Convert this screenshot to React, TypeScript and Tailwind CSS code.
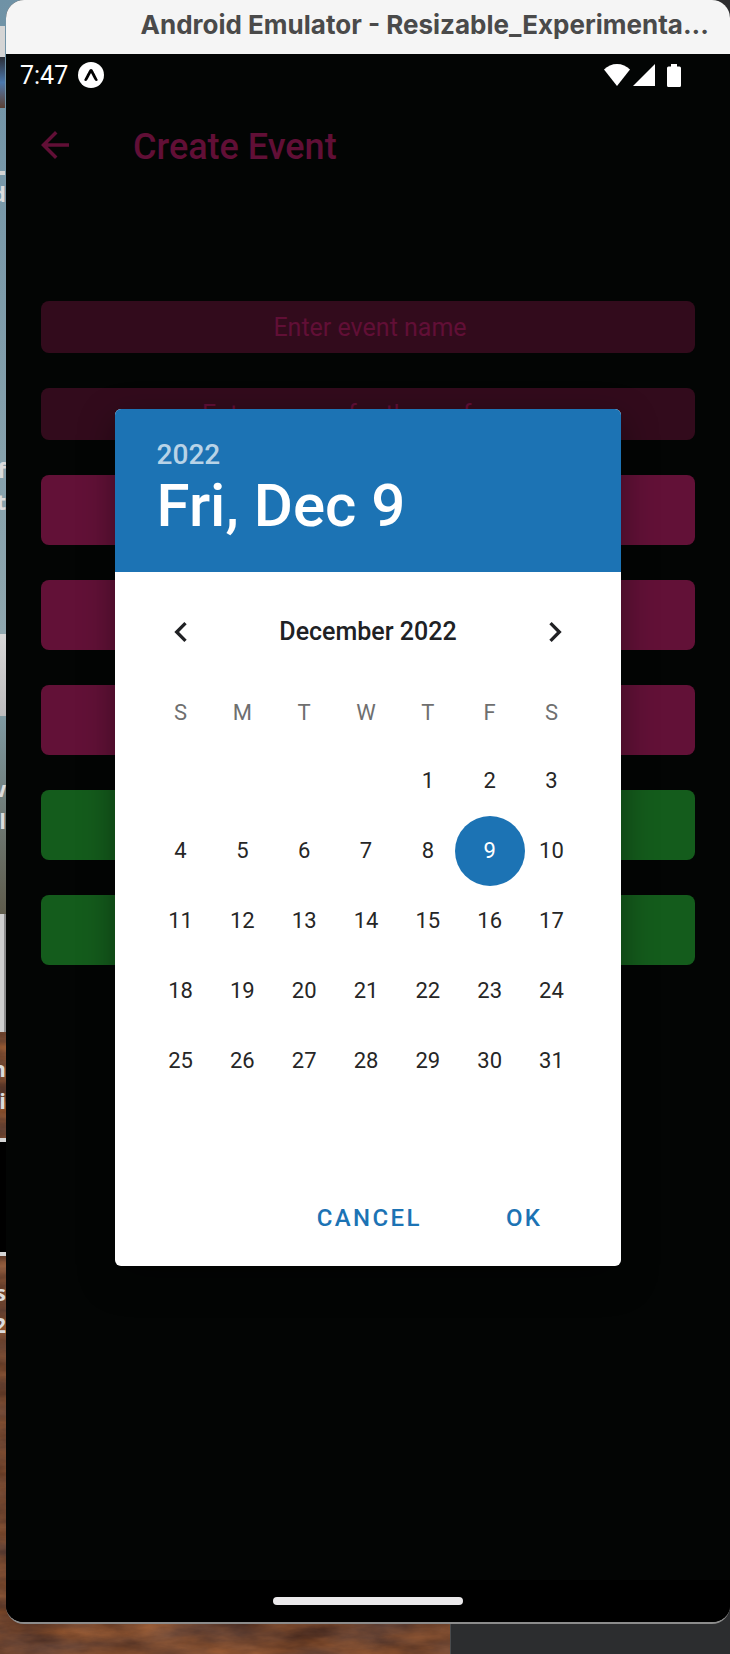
import React from "react";

const weekdays = ["S", "M", "T", "W", "T", "F", "S"];
const weeks: (number | null)[][] = [
  [null, null, null, null, 1, 2, 3],
  [4, 5, 6, 7, 8, 9, 10],
  [11, 12, 13, 14, 15, 16, 17],
  [18, 19, 20, 21, 22, 23, 24],
  [25, 26, 27, 28, 29, 30, 31],
];
const selectedDay = 9;

function Desktop() {
  return (
    <div aria-hidden="true" className="absolute inset-0 flex flex-col overflow-hidden bg-[#7d4a32] font-['Open_Sans',sans-serif] text-[22px] font-bold leading-[32px] text-[#dcdcdc]">
      <svg className="absolute inset-0 h-full w-full">
        <filter id="rust" x="0" y="0" width="100%" height="100%" colorInterpolationFilters="sRGB">
          <feTurbulence type="fractalNoise" baseFrequency="0.015 0.05" numOctaves="5" seed="4" />
          <feColorMatrix values="0.4 0 0 0 0.24  0.24 0.06 0 0 0.12  0.1 0.12 0 0 0.07  0 0 0 0 1" />
        </filter>
        <rect width="100%" height="100%" filter="url(#rust)" />
      </svg>
      <div className="relative flex h-[634px] flex-col bg-linear-to-b from-[#6f92a6] to-[#8fa7ae]">
        <div className="mt-[26px] h-[31px] w-[5px] bg-[#d5d5d5]" />
        <div className="h-[51px] w-[5px] bg-linear-to-b from-[#2b2f38] via-[#4a78ad] to-[#5b4033]" />
        <div className="mt-[63px] h-[4px] w-[5px] bg-[#d5d5d5]" />
        <div className="mt-[2px] flex w-[6px] justify-end">d</div>
        <div className="mt-[244px] flex w-[6px] justify-end">f</div>
        <div className="flex w-[6px] justify-end">t</div>
      </div>
      <div className="relative h-[82px] w-[6px] bg-linear-to-b from-[#d8d8d8] to-[#bdbdbd]" />
      <div className="relative flex h-[198px] w-[6px] flex-col justify-start bg-linear-to-b from-[#7f9aa2] to-[#5f5c4c] pt-[56px]">
        <div className="flex justify-end">w</div>
        <div className="flex justify-end">l</div>
      </div>
      <div className="relative h-[118px] w-[6px] border-r-2 border-[#8d8d8d] bg-[#cfcfcf]" />
      <div className="relative flex h-[106px] w-[6px] flex-col pt-[20px]">
        <div className="flex justify-end">n</div>
        <div className="flex justify-end">i</div>
      </div>
      <div className="relative h-[118px] w-[6px] border-y-4 border-[#d5d5d5] bg-black" />
      <div className="relative flex w-[6px] flex-col pt-[20px]">
        <div className="flex justify-end">s</div>
        <div className="flex justify-end">2</div>
      </div>
      <div className="absolute bottom-0 right-0 h-[60px] w-[280px] border-l border-[#4a4b4d] bg-[#2c2d2f]" />
      <div className="absolute right-0 top-0 h-[60px] w-[60px] bg-[#2c2c2e]" />
    </div>
  );
}

function StatusBar() {
  return (
    <div className="flex h-[42px] items-center pl-[14px] pr-[49px] text-white">
      <span className="pt-[2px] text-[25px] leading-[30px]">7:47</span>
      <svg viewBox="0 0 26 26" className="ml-[10px] size-[26px]" aria-label="Expo">
        <circle cx="13" cy="13" r="13" fill="#fff" />
        <path d="M11.8 7.6c.5-.8 2-.8 2.500 0 1 1.500 4 7.300 5.500 10.400-.4.900-2 1.300-2.800.3-1.200-1.900-2.500-4.500-4-7.200-1.500 2.700-2.800 5.300-4 7.200-.8 1-2.400.6-2.800-.3C7.800 14.900 10.800 9.100 11.800 7.600z" fill="#000" />
      </svg>
      <div className="ml-auto flex items-center">
        <svg viewBox="0 0 26 22" className="h-[22px] w-[26px]" aria-label="Wi-Fi">
          <path d="M13 22 0 5.500C3.500 2 8 0 13 0s9.500 2 13 5.500z" fill="#fff" />
        </svg>
        <svg viewBox="0 0 22 22" className="ml-[3px] size-[22px]" aria-label="Signal">
          <path d="M0 22 22 0v22z" fill="#fff" />
        </svg>
        <svg viewBox="0 0 14 23" className="ml-[12px] h-[23px] w-[14px]" aria-label="Battery">
          <path d="M4 0h6v2.500h2.500A1.500 1.500 0 0 1 14 4v17.500a1.500 1.500 0 0 1-1.500 1.500h-11A1.500 1.500 0 0 1 0 21.500V4a1.500 1.500 0 0 1 1.500-1.500H4z" fill="#fff" />
        </svg>
      </div>
    </div>
  );
}

function EventForm() {
  const field =
    "h-[52px] w-full rounded-[8px] bg-[#320b1c] pl-[4px] text-center text-[25px] text-[#610f36] placeholder:text-[#610f36] outline-none";
  return (
    <form className="flex flex-col gap-[35px] px-[35px] pt-[107px]" onSubmit={(e) => e.preventDefault()}>
      <input aria-label="Event name" placeholder="Enter event name" className={field} />
      <input aria-label="Names for the performer" placeholder="Enter names for the performer" className={field} />
      <button type="button" aria-label="Date" className="h-[70px] rounded-[8px] bg-[#621137]" />
      <button type="button" aria-label="Start time" className="h-[70px] rounded-[8px] bg-[#621137]" />
      <button type="button" aria-label="End time" className="h-[70px] rounded-[8px] bg-[#621137]" />
      <button type="button" aria-label="Location" className="h-[70px] rounded-[8px] bg-[#145c1c]" />
      <button type="submit" aria-label="Create" className="h-[70px] rounded-[8px] bg-[#145c1c]" />
    </form>
  );
}

function DatePicker() {
  return (
    <div role="dialog" aria-label="Choose date" className="w-[70%] overflow-hidden rounded-[6px] bg-white shadow-[0_12px_36px_0_rgba(0,0,0,0.4)]">
      <div className="h-[163px] bg-[#1c73b4] px-[42px] pt-[30px] font-medium text-white">
        <div className="text-[28px] leading-[32px] text-white/70">2022</div>
        <div className="text-[60px] leading-[70px]">Fri, Dec 9</div>
      </div>
      <div className="flex items-center justify-between px-[46px] pt-[40px] text-[#202124]">
        <button type="button" aria-label="Previous month">
          <svg viewBox="0 0 24 24" className="size-[40px]" fill="currentColor">
            <path d="M15.410 7.410 14 6l-6 6 6 6 1.410-1.410L10.830 12z" />
          </svg>
        </button>
        <h2 className="text-[25px] font-medium leading-[30px]">December 2022</h2>
        <button type="button" aria-label="Next month">
          <svg viewBox="0 0 24 24" className="size-[40px]" fill="currentColor">
            <path d="M10 6 8.590 7.410 13.170 12l-4.580 4.590L10 18l6-6z" />
          </svg>
        </button>
      </div>
      <div className="pl-[35px] pr-[39px] pt-[27px]">
        <table className="w-full table-fixed text-center text-[22px] leading-[26px]">
          <thead>
            <tr className="h-[67px] text-[#6f6f6f]">
              {weekdays.map((d, i) => (
                <th key={i} scope="col" className="p-0 font-normal">{d}</th>
              ))}
            </tr>
          </thead>
          <tbody className="text-[#262626]">
            {weeks.map((week, w) => (
              <tr key={w}>
                {week.map((day, i) => (
                  <td key={i} className="h-[70px] p-0">
                    {day !== null && (
                      <div className="flex justify-center">
                        <button
                          type="button"
                          className={
                            day === selectedDay
                              ? "size-[70px] shrink-0 rounded-full bg-[#1c73b4] text-white"
                              : "size-[70px] shrink-0 rounded-full"
                          }
                        >
                          {day}
                        </button>
                      </div>
                    )}
                  </td>
                ))}
              </tr>
            ))}
          </tbody>
        </table>
      </div>
      <div className="flex h-[170px] items-end justify-end gap-[56px] pb-[22px] pr-[65px] text-[24px] font-medium text-[#1c73b4]">
        <button type="button" className="h-[52px] px-[14px] tracking-widest">CANCEL</button>
        <button type="button" className="h-[52px] px-[14px] tracking-widest">OK</button>
      </div>
    </div>
  );
}

export default function App() {
  return (
    <div className="relative flex min-h-screen flex-col pb-[30px] pl-[6px] font-[Roboto,sans-serif]">
      <Desktop />
      <main className="relative flex grow flex-col overflow-hidden rounded-[18px] border-b-2 border-[#8c8c8c] bg-[#030504]">
        <header className="flex h-[54px] shrink-0 items-center justify-end bg-[#f5f5f5] pr-[21px] font-[Inter,sans-serif] text-[26px] font-bold leading-[30px] text-[#4a4a4a]">
          <h1 className="whitespace-nowrap pb-[4px]">Android Emulator - Resizable_Experimenta...</h1>
        </header>
        <div className="relative flex grow flex-col">
          <StatusBar />
          <div className="flex h-[98px] items-center pl-[28px] text-[#610f36]">
            <button type="button" aria-label="Back">
              <svg viewBox="0 0 24 24" className="size-[42px]" fill="currentColor">
                <path d="M20 11H7.830l5.590-5.590L12 4l-8 8 8 8 1.410-1.410L7.830 13H20z" />
              </svg>
            </button>
            <h2 className="ml-[57px] pt-[4px] text-[36px] font-medium leading-[40px]">Create Event</h2>
          </div>
          <EventForm />
          <div className="absolute inset-x-0 top-[355px] flex justify-center">
            <DatePicker />
          </div>
        </div>
        <footer className="flex h-[42px] shrink-0 justify-center bg-black pt-[17px]">
          <div className="h-[8px] w-[190px] rounded-full bg-[#ebe9eb]" />
        </footer>
      </main>
    </div>
  );
}
